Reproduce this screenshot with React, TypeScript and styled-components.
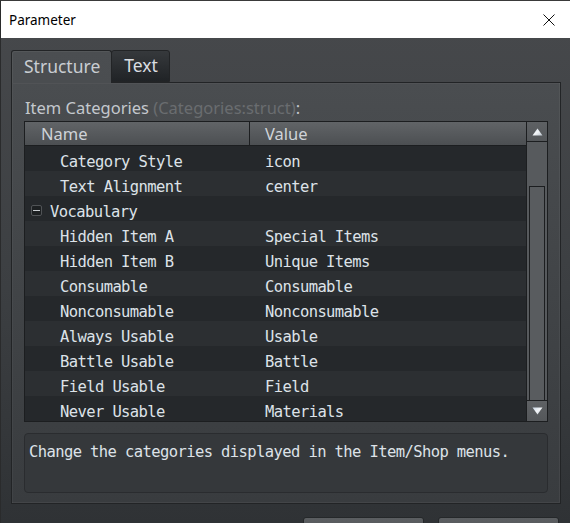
import React from "react";
import styled, { createGlobalStyle } from "styled-components";

const GlobalStyle = createGlobalStyle`
  html, body { margin: 0; padding: 0; background: #2f3235; }
  * { box-sizing: border-box; }
`;

const UI_FONT = `"Noto Sans", "Open Sans", "DejaVu Sans", sans-serif`;
const MONO_FONT = `"DejaVu Sans Mono", "Liberation Mono", monospace`;

const Window = styled.div`
  width: 570px;
  height: 523px;
  display: flex;
  flex-direction: column;
  overflow: hidden;
  border-left: 1px solid #2a2b2c;
  border-top: 1px solid #3a3a3a;
  background: linear-gradient(#47494c 0%, #3c3f42 55%, #2f3235 100%);
`;

const TitleBar = styled.div`
  height: 37px;
  flex: none;
  background: #ffffff;
  display: flex;
  align-items: center;
  justify-content: space-between;
  padding: 0 0 0 8px;
  font-family: "Segoe UI", "Noto Sans", sans-serif;
  font-size: 13.5px;
  color: #000;
`;

const CloseButton = styled.div`
  width: 42px;
  height: 37px;
  display: flex;
  align-items: center;
  justify-content: center;
`;

const Body = styled.div`
  flex: 1;
  display: flex;
  flex-direction: column;
  padding: 12px 10px 0 10px;
`;

const TabBar = styled.div`
  display: flex;
  align-items: flex-end;
  height: 32px;
  position: relative;
  z-index: 1;
`;

const Tab = styled.div<{ $active?: boolean }>`
  height: ${(p) => (p.$active ? 33 : 32)}px;
  margin-bottom: ${(p) => (p.$active ? -1 : 0)}px;
  padding: 0 11px 3px 12px;
  display: flex;
  align-items: center;
  font-family: ${UI_FONT};
  font-size: 17.5px;
  color: ${(p) => (p.$active ? "#c9cdd2" : "#dadee2")};
  border: 1px solid #222426;
  border-bottom: ${(p) => (p.$active ? "none" : "1px solid #222426")};
  border-radius: 3px 3px 0 0;
  background: ${(p) =>
    p.$active
      ? "linear-gradient(#4b4e51, #4a4d50)"
      : "linear-gradient(#36393c, #202326)"};
  box-shadow: ${(p) => (p.$active ? "inset 1px 1px 0 rgba(255,255,255,0.05)" : "none")};
  & + & {
    margin-left: -1px;
  }
`;

const Panel = styled.div`
  width: 550px;
  height: 422px;
  border: 1px solid #222426;
  box-shadow: inset 1px 1px 0 rgba(255, 255, 255, 0.04),
    inset -1px -1px 0 rgba(255, 255, 255, 0.05);
  background: linear-gradient(#4a4d50 0%, #414447 50%, #393c3f 100%);
  display: flex;
  flex-direction: column;
  padding: 13px 11px 0 12px;
`;

const FieldLabel = styled.div`
  font-family: ${UI_FONT};
  font-size: 16.5px;
  line-height: 24px;
  height: 25px;
  color: #c4c8cd;
  padding-left: 1px;
  white-space: nowrap;
`;

const TypeHint = styled.span`
  color: #6a6d70;
`;

const Table = styled.div`
  width: 524px;
  height: 301px;
  border: 1px solid #1c1e20;
  display: flex;
  background: #25282b;
`;

const Grid = styled.div`
  flex: 1;
  display: flex;
  flex-direction: column;
  min-width: 0;
`;

const HeaderRow = styled.div`
  height: 24px;
  flex: none;
  display: grid;
  grid-template-columns: 224px 1fr;
  border-bottom: 1px solid #1c1e20;
`;

const HeaderCell = styled.div<{ $indent: number }>`
  background: linear-gradient(#616467, #4c4f52);
  display: flex;
  align-items: center;
  padding-left: ${(p) => p.$indent}px;
  font-family: ${UI_FONT};
  font-size: 16.5px;
  color: #cfd3d8;
  & + & {
    border-left: 1px solid #1c1e20;
  }
`;

const Row = styled.div<{ $odd: boolean }>`
  height: 25px;
  flex: none;
  display: grid;
  grid-template-columns: 240px 1fr;
  align-items: center;
  padding-top: 6px;
  background: ${(p) => (p.$odd ? "#25282b" : "#2c2f32")};
  font-family: ${MONO_FONT};
  font-size: 15.5px;
  letter-spacing: -0.6px;
  color: #dde2e8;
  white-space: nowrap;
`;

const NameCell = styled.div<{ $group?: boolean }>`
  display: flex;
  align-items: center;
  padding-left: ${(p) => (p.$group ? 6 : 35)}px;
  gap: 8px;
`;

const Toggle = styled.span`
  width: 11px;
  height: 11px;
  flex: none;
  margin-top: -3px;
  border: 1px solid #505356;
  border-radius: 2px;
  background: #1d2022;
  display: flex;
  align-items: center;
  justify-content: center;
  &::after {
    content: "";
    width: 7px;
    height: 1px;
    background: #c8ccd0;
  }
`;

const ScrollBar = styled.div`
  width: 21px;
  flex: none;
  display: flex;
  flex-direction: column;
  border-left: 1px solid #1c1e20;
  background: #575a5d;
`;

const ScrollButton = styled.div`
  height: 20px;
  flex: none;
  display: flex;
  align-items: center;
  justify-content: center;
  background: linear-gradient(#5e6164, #54575a);
  border-bottom: 1px solid #1c1e20;
  &:last-child {
    border-bottom: none;
    border-top: 1px solid #1c1e20;
    height: 21px;
  }
`;

const Track = styled.div`
  flex: 1;
  display: flex;
  flex-direction: column;
  padding: 44px 2px 0 2px;
`;

const Thumb = styled.div`
  flex: 1;
  border: 1px solid #1c1e20;
  border-bottom: none;
  background: #595c5f;
`;

const Description = styled.div`
  margin-top: 11px;
  width: 524px;
  height: 60px;
  border: 1px solid #2a2c2f;
  border-radius: 4px;
  background: #35383b;
  padding: 7px 4px;
  font-family: ${MONO_FONT};
  font-size: 15.5px;
  letter-spacing: -0.6px;
  line-height: 22px;
  color: #dde2e8;
  white-space: nowrap;
`;

const ButtonRow = styled.div`
  display: flex;
  justify-content: flex-end;
  gap: 14px;
  padding: 13px 1px 0 0;
`;

const DialogButton = styled.div`
  width: 121px;
  height: 30px;
  border: 1px solid #25282a;
  border-radius: 3px;
  background: linear-gradient(#5b5e61, #4e5154);
`;

const Arrow = ({ down }: { down?: boolean }) => (
  <svg width="11" height="8" viewBox="0 0 11 8">
    <defs>
      <linearGradient id={down ? "ad" : "au"} x1="0" y1="0" x2="1" y2="1">
        <stop offset="0" stopColor="#c9d6e6" />
        <stop offset="0.5" stopColor="#f4f6f8" />
        <stop offset="1" stopColor="#b8c2cc" />
      </linearGradient>
    </defs>
    <polygon
      points={down ? "0.5,0.5 10.5,0.5 5.5,7.5" : "5.5,0.5 10.5,7.5 0.5,7.5"}
      fill={`url(#${down ? "ad" : "au"})`}
    />
  </svg>
);

type Entry = { name: string; value?: string; group?: boolean };

const rows: Entry[] = [
  { name: "Category Style", value: "icon" },
  { name: "Text Alignment", value: "center" },
  { name: "Vocabulary", group: true },
  { name: "Hidden Item A", value: "Special Items" },
  { name: "Hidden Item B", value: "Unique Items" },
  { name: "Consumable", value: "Consumable" },
  { name: "Nonconsumable", value: "Nonconsumable" },
  { name: "Always Usable", value: "Usable" },
  { name: "Battle Usable", value: "Battle" },
  { name: "Field Usable", value: "Field" },
  { name: "Never Usable", value: "Materials" },
];

export default function App() {
  return (
    <>
      <GlobalStyle />
      <Window>
        <TitleBar>
          <span>Parameter</span>
          <CloseButton>
            <svg width="12" height="12" viewBox="0 0 12 12">
              <path d="M0.5 0.5 L11.5 11.5 M11.5 0.5 L0.5 11.5" stroke="#111" strokeWidth="1" />
            </svg>
          </CloseButton>
        </TitleBar>
        <Body>
          <TabBar>
            <Tab $active>Structure</Tab>
            <Tab>Text</Tab>
          </TabBar>
          <Panel>
            <FieldLabel>
              Item Categories <TypeHint>(Categories:struct)</TypeHint>:
            </FieldLabel>
            <Table>
              <Grid>
                <HeaderRow>
                  <HeaderCell $indent={16}>Name</HeaderCell>
                  <HeaderCell $indent={15}>Value</HeaderCell>
                </HeaderRow>
                {rows.map((r, i) => (
                  <Row key={r.name} $odd={i % 2 === 0}>
                    <NameCell $group={r.group}>
                      {r.group && <Toggle />}
                      <span>{r.name}</span>
                    </NameCell>
                    <span>{r.value ?? ""}</span>
                  </Row>
                ))}
              </Grid>
              <ScrollBar>
                <ScrollButton>
                  <Arrow />
                </ScrollButton>
                <Track>
                  <Thumb />
                </Track>
                <ScrollButton>
                  <Arrow down />
                </ScrollButton>
              </ScrollBar>
            </Table>
            <Description>Change the categories displayed in the Item/Shop menus.</Description>
          </Panel>
          <ButtonRow>
            <DialogButton />
            <DialogButton />
          </ButtonRow>
        </Body>
      </Window>
    </>
  );
}
